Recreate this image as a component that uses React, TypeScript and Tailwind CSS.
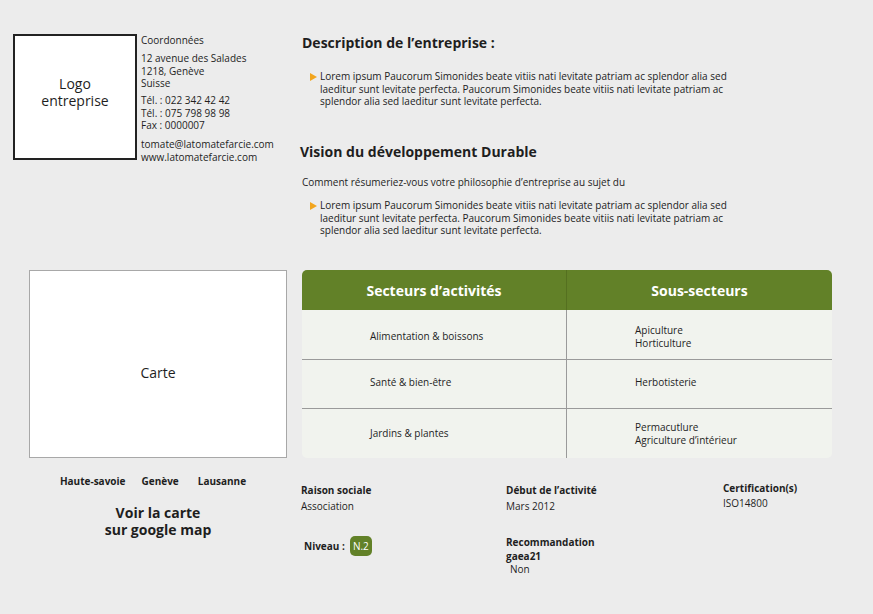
import React from "react";

const LOREM =
  "Lorem ipsum Paucorum Simonides beate vitiis nati levitate patriam ac splendor alia sed laeditur sunt levitate perfecta. Paucorum Simonides beate vitiis nati levitate patriam ac splendor alia sed laeditur sunt levitate perfecta.";

function Bullet({ children }: { children: React.ReactNode }) {
  return (
    <div className="flex items-start pl-[10px]">
      <svg width="7" height="8" viewBox="0 0 7 8" className="mt-[2.5px] mr-[3px] shrink-0">
        <polygon points="0,0 7,4 0,8" fill="#f2a51e" />
      </svg>
      <p className="text-[10px] leading-[12.5px] w-[414px] text-[#222]">{children}</p>
    </div>
  );
}

function Row({
  left,
  right,
  last,
  cls,
  h,
}: {
  left: React.ReactNode;
  right: React.ReactNode;
  last?: boolean;
  cls?: string;
  h: string;
}) {
  return (
    <div className={`flex ${h} ${last ? "" : "border-b border-[#9a9a9a]"}`}>
      <div className={`w-[265px] flex items-center pl-[68px] border-r border-[#9a9a9a] text-[10px] leading-[12.5px] ${cls ?? ""}`}>
        {left}
      </div>
      <div className={`flex-1 flex items-center pl-[68px] text-[10px] leading-[12.5px] ${cls ?? ""}`}>
        <div>{right}</div>
      </div>
    </div>
  );
}

export default function App() {
  return (
    <div className="w-[873px] h-[614px] bg-[#ececec] font-['Open_Sans',sans-serif] text-[#1e1e1e] overflow-hidden">
      {/* Top section */}
      <div className="h-[270px] flex pt-[34px]">
        <div className="w-[300px] flex items-start pl-[13px]">
          <div className="w-[124px] h-[126px] border-2 border-[#222] bg-white flex flex-col items-center justify-center text-center text-[14px] leading-[17px] pb-[11px]">
            <div>Logo</div>
            <div>entreprise</div>
          </div>
          <div className="ml-[4px] text-[10px] leading-[12.5px]">
            <div>Coordonnées</div>
            <div className="mt-[5.5px]">
              12 avenue des Salades
              <br />
              1218, Genève
              <br />
              Suisse
            </div>
            <div className="mt-[4.5px]">
              Tél. : 022 342 42 42
              <br />
              Tél. : 075 798 98 98
              <br />
              Fax : 0000007
            </div>
            <div className="mt-[6.5px]">
              tomate@latomatefarcie.com
              <br />
              www.latomatefarcie.com
            </div>
          </div>
        </div>
        <div className="flex-1">
          <h2 className="ml-[2px] text-[14px] leading-[20px] font-bold -mt-[1px]">Description de l’entreprise :</h2>
          <div className="mt-[17px]">
            <Bullet>{LOREM}</Bullet>
          </div>
          <h2 className="mt-[34px] text-[14px] leading-[20px] font-bold">Vision du développement Durable</h2>
          <p className="mt-[14px] ml-[2px] text-[10px] leading-[12.5px]">
            Comment résumeriez-vous votre philosophie d’entreprise au sujet du
          </p>
          <div className="mt-[11px]">
            <Bullet>{LOREM}</Bullet>
          </div>
        </div>
      </div>

      {/* Middle section */}
      <div className="flex h-[188px]">
        <div className="w-[300px] pl-[29px]">
          <div className="w-[258px] h-[188px] bg-white border border-[#a8a8a8] flex items-center justify-center text-[14px] pt-[16px]">
            Carte
          </div>
        </div>
        <div className="ml-[2px] w-[530px] h-[188px] flex flex-col rounded-[5px] overflow-hidden bg-[#f1f3ee]">
          <div className="h-[40px] bg-[#628128] flex text-white font-bold text-[14px]">
            <div className="w-[265px] flex items-center justify-center border-r border-[#557020]">
              Secteurs d’activités
            </div>
            <div className="flex-1 flex items-center justify-center">Sous-secteurs</div>
          </div>
          <Row
            h="h-[50px]"
            cls="pt-[4px]"
            left="Alimentation & boissons"
            right={
              <>
                Apiculture
                <br />
                Horticulture
              </>
            }
          />
          <Row h="h-[49px]" cls="pb-[3px]" left="Santé & bien-être" right="Herbotisterie" />
          <Row
            h="h-[49px]"
            last
            left="Jardins & plantes"
            right={
              <>
                Permacutlure
                <br />
                Agriculture d’intérieur
              </>
            }
          />
        </div>
      </div>

      {/* Bottom section */}
      <div className="flex">
        <div className="w-[300px] pl-[29px]">
          <div className="w-[258px] flex flex-col items-center">
            <div className="mt-[16px] flex gap-[16px] text-[10px] leading-[14px] font-bold -ml-[10px]">
              <span>Haute-savoie</span>
              <span>Genève</span>
              <span className="ml-[3px]">Lausanne</span>
            </div>
            <div className="mt-[16px] flex flex-col items-center text-[14px] leading-[17px] font-bold">
              <div>Voir la carte</div>
              <div>sur google map</div>
            </div>
          </div>
        </div>
        <div className="flex-1 pt-[24px] pl-[1px]">
          <div className="flex text-[10px]">
            <div className="w-[205px] leading-[16px]">
              <div className="font-bold">Raison sociale</div>
              <div>Association</div>
            </div>
            <div className="w-[217px] leading-[16px]">
              <div className="font-bold">Début de l’activité</div>
              <div>Mars 2012</div>
            </div>
            <div className="leading-[15px] -mt-[1px]">
              <div className="font-bold">Certification(s)</div>
              <div>ISO14800</div>
            </div>
          </div>
          <div className="flex text-[10px] mt-[22px]">
            <div className="w-[205px] flex items-center pl-[3px] h-[20px]">
              <span className="font-bold">Niveau :</span>
              <span className="ml-[5px] w-[22px] h-[20px] rounded-[5px] bg-[#628128] text-white flex items-center justify-center">
                N.2
              </span>
            </div>
            <div className="leading-[13.5px]">
              <div className="font-bold">
                Recommandation
                <br />
                gaea21
              </div>
              <div className="pl-[4px]">Non</div>
            </div>
          </div>
        </div>
      </div>
    </div>
  );
}
